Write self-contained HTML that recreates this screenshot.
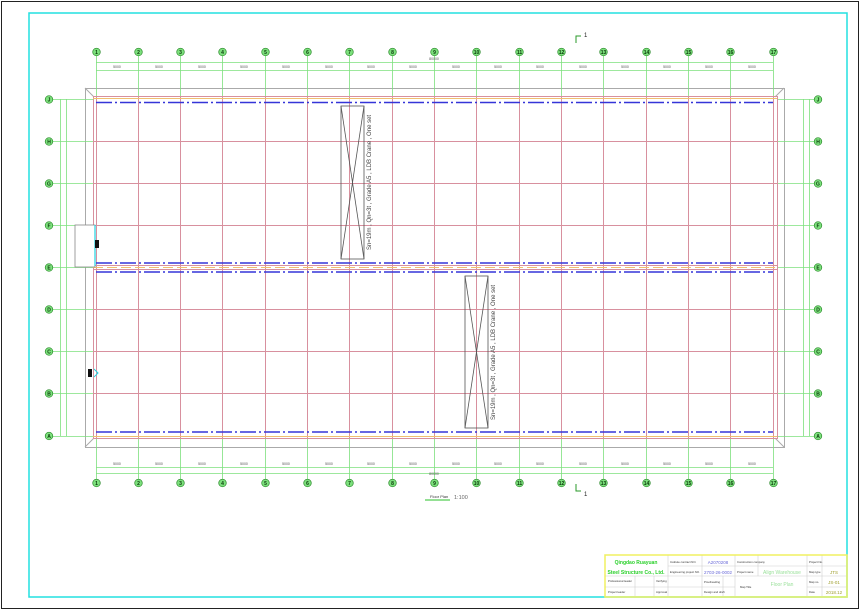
<!DOCTYPE html>
<html><head><meta charset="utf-8"><style>
html,body{margin:0;padding:0;background:#fff;}
svg{display:block;font-family:"Liberation Sans",sans-serif;}
</style></head><body>
<svg width="860" height="610" viewBox="0 0 860 610" xmlns="http://www.w3.org/2000/svg">
<rect x="1.5" y="1.5" width="857" height="607" fill="#fff" stroke="#222" stroke-width="1"/>
<rect x="29" y="13" width="818" height="584" fill="none" stroke="#22e0e0" stroke-width="1.5"/>

<rect x="85.5" y="88.5" width="699" height="359" fill="none" stroke="#aaa" stroke-width="1"/>
<line x1="85" y1="88" x2="94" y2="97" stroke="#aaa"/>
<line x1="784" y1="88" x2="775" y2="97" stroke="#aaa"/>
<line x1="85" y1="447" x2="94" y2="438" stroke="#aaa"/>
<line x1="784" y1="447" x2="775" y2="438" stroke="#aaa"/>

<g stroke="#7de07d" stroke-width="0.8">
<g id="vt">
<line x1="96.5" y1="56" x2="96.5" y2="96"/><line x1="138.5" y1="56" x2="138.5" y2="96"/><line x1="180.5" y1="56" x2="180.5" y2="96"/><line x1="222.5" y1="56" x2="222.5" y2="96"/><line x1="265.5" y1="56" x2="265.5" y2="96"/><line x1="307.5" y1="56" x2="307.5" y2="96"/><line x1="349.5" y1="56" x2="349.5" y2="96"/><line x1="392.5" y1="56" x2="392.5" y2="96"/><line x1="434.5" y1="56" x2="434.5" y2="96"/><line x1="476.5" y1="56" x2="476.5" y2="96"/><line x1="519.5" y1="56" x2="519.5" y2="96"/><line x1="561.5" y1="56" x2="561.5" y2="96"/><line x1="603.5" y1="56" x2="603.5" y2="96"/><line x1="646.5" y1="56" x2="646.5" y2="96"/><line x1="688.5" y1="56" x2="688.5" y2="96"/><line x1="730.5" y1="56" x2="730.5" y2="96"/><line x1="773.5" y1="56" x2="773.5" y2="96"/>
</g>
<use href="#vt" transform="translate(0,383)"/>
<g id="hl">
<line x1="53" y1="99.5" x2="93" y2="99.5"/><line x1="53" y1="141.5" x2="93" y2="141.5"/><line x1="53" y1="183.5" x2="93" y2="183.5"/><line x1="53" y1="225.5" x2="93" y2="225.5"/><line x1="53" y1="267.5" x2="93" y2="267.5"/><line x1="53" y1="309.5" x2="93" y2="309.5"/><line x1="53" y1="351.5" x2="93" y2="351.5"/><line x1="53" y1="393.5" x2="93" y2="393.5"/><line x1="53" y1="436.5" x2="93" y2="436.5"/>
</g>
<use href="#hl" transform="translate(724,0)"/>
<line x1="96" y1="62.5" x2="773" y2="62.5"/><line x1="96" y1="70.5" x2="773" y2="70.5"/>
<line x1="96" y1="467.5" x2="773" y2="467.5"/><line x1="96" y1="473.5" x2="773" y2="473.5"/>
<line x1="60.5" y1="99" x2="60.5" y2="436"/><line x1="66.5" y1="99" x2="66.5" y2="436"/>
<line x1="803.5" y1="99" x2="803.5" y2="436"/><line x1="809.5" y1="99" x2="809.5" y2="436"/>
</g>
<g stroke="#d8909e" stroke-width="1">
<line x1="96.5" y1="97" x2="96.5" y2="438"/><line x1="138.5" y1="97" x2="138.5" y2="438"/><line x1="180.5" y1="97" x2="180.5" y2="438"/><line x1="222.5" y1="97" x2="222.5" y2="438"/><line x1="265.5" y1="97" x2="265.5" y2="438"/><line x1="307.5" y1="97" x2="307.5" y2="438"/><line x1="349.5" y1="97" x2="349.5" y2="438"/><line x1="392.5" y1="97" x2="392.5" y2="438"/><line x1="434.5" y1="97" x2="434.5" y2="438"/><line x1="476.5" y1="97" x2="476.5" y2="438"/><line x1="519.5" y1="97" x2="519.5" y2="438"/><line x1="561.5" y1="97" x2="561.5" y2="438"/><line x1="603.5" y1="97" x2="603.5" y2="438"/><line x1="646.5" y1="97" x2="646.5" y2="438"/><line x1="688.5" y1="97" x2="688.5" y2="438"/><line x1="730.5" y1="97" x2="730.5" y2="438"/><line x1="773.5" y1="97" x2="773.5" y2="438"/>
<line x1="93" y1="141.5" x2="777" y2="141.5"/><line x1="93" y1="183.5" x2="777" y2="183.5"/><line x1="93" y1="225.5" x2="777" y2="225.5"/><line x1="93" y1="265.5" x2="777" y2="265.5"/><line x1="93" y1="269.5" x2="777" y2="269.5"/><line x1="93" y1="309.5" x2="777" y2="309.5"/><line x1="93" y1="351.5" x2="777" y2="351.5"/><line x1="93" y1="393.5" x2="777" y2="393.5"/>
<rect x="93.5" y="96.5" width="684" height="342" fill="none"/>
</g>
<g stroke="#f0c070" stroke-width="1"><line x1="93" y1="98.5" x2="777" y2="98.5"/><line x1="93" y1="436.5" x2="777" y2="436.5"/><line x1="93" y1="267.5" x2="777" y2="267.5" stroke-dasharray="10 4"/></g>
<g stroke="#3535d8" stroke-width="1.6" stroke-dasharray="16 3 2 3">
<line x1="96" y1="102.5" x2="773" y2="102.5"/><line x1="96" y1="263" x2="773" y2="263"/><line x1="96" y1="272" x2="773" y2="272"/><line x1="96" y1="432" x2="773" y2="432"/>
</g>

<g stroke="#555" stroke-width="0.8" fill="none">
<rect x="341" y="106" width="23" height="153"/><line x1="341" y1="106" x2="364" y2="259"/><line x1="364" y1="106" x2="341" y2="259"/>
<rect x="465" y="276" width="23" height="152"/><line x1="465" y1="276" x2="488" y2="428"/><line x1="488" y1="276" x2="465" y2="428"/>
</g>
<text transform="translate(371,250) rotate(-90)" font-size="6" fill="#444">Sn=19m , Qn=3t , Grade A5 , LDB Crane , One set</text>
<text transform="translate(495,420) rotate(-90)" font-size="6" fill="#444">Sn=19m , Qn=3t , Grade A5 , LDB Crane , One set</text>

<rect x="75" y="225" width="20" height="42" fill="#fff" stroke="#888" stroke-width="0.8"/>
<line x1="95" y1="225" x2="95" y2="266" stroke="#22d0e0" stroke-width="1.2"/>
<rect x="95" y="240" width="4" height="8" fill="#111"/>
<rect x="88" y="369" width="4" height="8" fill="#111"/>
<path d="M94,369 l4,4 l-4,4" fill="none" stroke="#22d0e0"/>

<g fill="#7de07d" stroke="#2a8a2a" stroke-width="0.7">
<g id="tc">
<circle cx="96.5" cy="52" r="3.8"/><circle cx="138.5" cy="52" r="3.8"/><circle cx="180.5" cy="52" r="3.8"/><circle cx="222.5" cy="52" r="3.8"/><circle cx="265.5" cy="52" r="3.8"/><circle cx="307.5" cy="52" r="3.8"/><circle cx="349.5" cy="52" r="3.8"/><circle cx="392.5" cy="52" r="3.8"/><circle cx="434.5" cy="52" r="3.8"/><circle cx="476.5" cy="52" r="3.8"/><circle cx="519.5" cy="52" r="3.8"/><circle cx="561.5" cy="52" r="3.8"/><circle cx="603.5" cy="52" r="3.8"/><circle cx="646.5" cy="52" r="3.8"/><circle cx="688.5" cy="52" r="3.8"/><circle cx="730.5" cy="52" r="3.8"/><circle cx="773.5" cy="52" r="3.8"/>
</g>
<use href="#tc" transform="translate(0,431)"/>
<g id="lc">
<circle cx="49" cy="99.5" r="3.8"/><circle cx="49" cy="141.5" r="3.8"/><circle cx="49" cy="183.5" r="3.8"/><circle cx="49" cy="225.5" r="3.8"/><circle cx="49" cy="267.5" r="3.8"/><circle cx="49" cy="309.5" r="3.8"/><circle cx="49" cy="351.5" r="3.8"/><circle cx="49" cy="393.5" r="3.8"/><circle cx="49" cy="436" r="3.8"/>
</g>
<use href="#lc" transform="translate(769,0)"/>
</g>
<g fill="#0a3a0a" font-size="5" font-weight="bold" text-anchor="middle">
<g id="tt">
<text x="96.5" y="54">1</text><text x="138.5" y="54">2</text><text x="180.5" y="54">3</text><text x="222.5" y="54">4</text><text x="265.5" y="54">5</text><text x="307.5" y="54">6</text><text x="349.5" y="54">7</text><text x="392.5" y="54">8</text><text x="434.5" y="54">9</text><text x="476.5" y="54">10</text><text x="519.5" y="54">11</text><text x="561.5" y="54">12</text><text x="603.5" y="54">13</text><text x="646.5" y="54">14</text><text x="688.5" y="54">15</text><text x="730.5" y="54">16</text><text x="773.5" y="54">17</text>
</g>
<use href="#tt" transform="translate(0,431)"/>
<g id="lt">
<text x="49" y="101.5">J</text><text x="49" y="143.5">H</text><text x="49" y="185.5">G</text><text x="49" y="227.5">F</text><text x="49" y="269.5">E</text><text x="49" y="311.5">D</text><text x="49" y="353.5">C</text><text x="49" y="395.5">B</text><text x="49" y="438">A</text>
</g>
<use href="#lt" transform="translate(769,0)"/>
</g>

<g font-size="3.5" fill="#555" text-anchor="middle">
<g id="dt">
<text x="117" y="68">5000</text><text x="159" y="68">5000</text><text x="202" y="68">5000</text><text x="244" y="68">5000</text><text x="286" y="68">5000</text><text x="329" y="68">5000</text><text x="371" y="68">5000</text><text x="413" y="68">5000</text><text x="456" y="68">5000</text><text x="498" y="68">5000</text><text x="540" y="68">5000</text><text x="583" y="68">5000</text><text x="625" y="68">5000</text><text x="667" y="68">5000</text><text x="709" y="68">5000</text><text x="752" y="68">5000</text>
</g>
<use href="#dt" transform="translate(0,397)"/>
<text x="434" y="60">80000</text><text x="434" y="475">80000</text>
</g>

<path d="M576,43 v-7 h5" fill="none" stroke="#2a9a2a" stroke-width="1"/><text x="584" y="37" font-size="6" fill="#222">1</text>
<path d="M576,484 v7 h5" fill="none" stroke="#2a9a2a" stroke-width="1"/><text x="584" y="496" font-size="6" fill="#222">1</text>
<text x="430" y="498" font-size="4" fill="#333">Floor Plan</text>
<line x1="425" y1="500" x2="450" y2="500" stroke="#2ac02a"/>
<text x="454" y="499" font-size="5.5" fill="#666">1:100</text>

<g stroke="#d0d0d0" stroke-width="0.6" fill="none">
<line x1="668" y1="566" x2="847" y2="566"/><line x1="605" y1="576" x2="847" y2="576"/><line x1="605" y1="587" x2="735" y2="587"/><line x1="807" y1="587" x2="847" y2="587"/>
<line x1="668" y1="555" x2="668" y2="597"/><line x1="702" y1="555" x2="702" y2="597"/><line x1="735" y1="555" x2="735" y2="597"/><line x1="758" y1="555" x2="758" y2="576"/><line x1="807" y1="555" x2="807" y2="597"/><line x1="822" y1="555" x2="822" y2="597"/>
<line x1="635" y1="576" x2="635" y2="597"/><line x1="654" y1="576" x2="654" y2="597"/><line x1="723" y1="576" x2="723" y2="597"/>
</g>
<rect x="605" y="555" width="242" height="42" fill="none" stroke="#f0f060" stroke-width="1.5"/>
<g font-size="2.8" fill="#333">
<text x="608" y="582">Professional leader</text><text x="608" y="593">Project leader</text><text x="656" y="582">Verifying</text><text x="656" y="593">Approval</text>
<text x="670" y="563">Institute contract NO.</text><text x="670" y="573">Engineering project NO.</text><text x="704" y="583">Proofreading</text><text x="704" y="593">Design and draft</text>
<text x="737" y="563">Construction company</text><text x="737" y="573">Project name</text><text x="740" y="588">Map Title</text>
<text x="809" y="563">Project No.</text><text x="809" y="573">Map type</text><text x="809" y="583">Map no.</text><text x="809" y="593">Date</text>
</g>
<g font-size="5" fill="#2ad02a" font-weight="bold" text-anchor="middle">
<text x="636" y="564">Qingdao Ruayuan</text><text x="636" y="574">Steel Structure Co., Ltd.</text>
</g>
<g font-size="4.5" fill="#6a6ad8" text-anchor="middle"><text x="718" y="564">A2070208</text><text x="718" y="574">2703-26-0002</text></g>
<g font-size="5" fill="#9ae09a" text-anchor="middle"><text x="782" y="574">Align Warehouse</text><text x="782" y="586">Floor Plan</text></g>
<g font-size="4.5" fill="#a0a030" text-anchor="middle"><text x="834" y="574">JTS</text><text x="834" y="584">JS-01</text><text x="834" y="594">2018.12</text></g>
</svg>
</body></html>
